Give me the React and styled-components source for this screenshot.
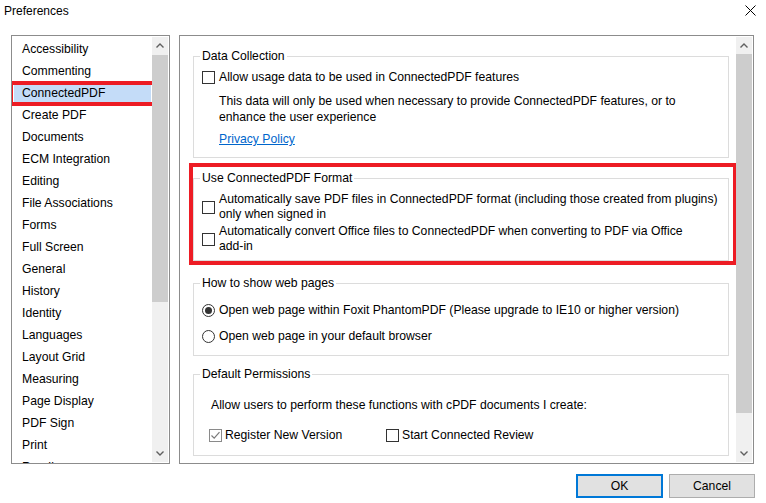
import React from 'react';
import styled, { createGlobalStyle } from 'styled-components';

const GlobalStyle = createGlobalStyle`
  html, body {
    margin: 0;
    padding: 0;
    background: #ffffff;
  }
  body {
    font-family: "Liberation Sans", Arial, sans-serif;
    font-size: 12.2px;
    color: #000000;
  }
`;

const categories = [
  'Accessibility', 'Commenting', 'ConnectedPDF', 'Create PDF', 'Documents',
  'ECM Integration', 'Editing', 'File Associations', 'Forms', 'Full Screen',
  'General', 'History', 'Identity', 'Languages', 'Layout Grid', 'Measuring',
  'Page Display', 'PDF Sign', 'Print', 'Reading',
];

const Dialog = styled.div`
  width: 766px;
  height: 503px;
  background: #ffffff;
  display: flex;
  flex-direction: column;
  overflow: hidden;
`;

const TitleBar = styled.div`
  height: 35px;
  display: flex;
  justify-content: space-between;
  align-items: flex-start;
  padding: 4px 10px 0 4px;
  box-sizing: border-box;
  line-height: 15px;
`;

const Title = styled.span`
  font-size: 12px;
`;

const CloseButton = styled.div`
  width: 11px;
  height: 11px;
  margin-top: 1px;
  display: flex;
`;

const Body = styled.div`
  display: flex;
  gap: 9px;
  padding-left: 11px;
  height: 429px;
`;

const ListBox = styled.div`
  width: 159px;
  box-sizing: border-box;
  border: 1px solid #8c8c8c;
  display: flex;
`;

const ListItems = styled.div`
  flex: 1;
  padding: 4px 1px 0 2px;
  overflow: hidden;
`;

const ListItem = styled.div`
  position: relative;
  height: 18px;
  line-height: 18px;
  margin-bottom: 4px;
  padding-left: 8px;
  background: ${({ $selected }) => ($selected ? '#c4dcf8' : 'transparent')};
  white-space: nowrap;
`;

const Highlight = styled.div`
  position: absolute;
  left: -5px;
  top: -3px;
  right: -5px;
  bottom: -4px;
  border: 4px solid #ed1c24;
  pointer-events: none;
`;

const ScrollBar = styled.div`
  width: 16px;
  margin: 1px 1px 1px 0;
  background: #f0f0f0;
  display: flex;
  flex-direction: column;
`;

const ScrollArrow = styled.div`
  height: 17px;
  display: flex;
  align-items: center;
  justify-content: center;
  flex-shrink: 0;
`;

const ScrollGap = styled.div`
  height: ${({ $h }) => $h}px;
  flex-shrink: 0;
`;

const ScrollThumb = styled.div`
  height: ${({ $h }) => $h}px;
  background: #cdcdcd;
  flex-shrink: 0;
`;

const ScrollSpace = styled.div`
  flex: 1;
`;

const Panel = styled.div`
  width: 575px;
  box-sizing: border-box;
  border: 1px solid #8c8c8c;
  display: flex;
`;

const PanelContent = styled.div`
  flex: 1;
  padding: 0 7px 0 13px;
  overflow: hidden;
  display: flex;
  flex-direction: column;
`;

const GroupBox = styled.fieldset`
  margin: ${({ $mt }) => $mt}px 0 0 0;
  padding: 0 0 ${({ $pb }) => $pb}px 0;
  border: 1px solid #dcdcdc;
  min-width: 0;
`;

const Legend = styled.legend`
  padding: 0 2px;
  margin-left: 6px;
  line-height: 15px;
`;

const Annotated = styled.div`
  position: relative;
  margin-top: ${({ $mt }) => $mt}px;
`;

const RedFrame = styled.div`
  position: absolute;
  left: -4px;
  top: -8px;
  right: -8px;
  bottom: -4px;
  border: 4px solid #ed1c24;
  pointer-events: none;
`;

const OptionRow = styled.label`
  display: flex;
  align-items: center;
  gap: ${({ $gap }) => $gap || 4}px;
  margin-top: ${({ $mt }) => $mt}px;
  margin-left: ${({ $ml }) => $ml || 8}px;
  line-height: ${({ $lh }) => $lh || 16}px;
`;

const Box = styled.span`
  width: 13px;
  height: 13px;
  box-sizing: border-box;
  border: 1px solid ${({ $light }) => ($light ? '#8a8a8a' : '#333333')};
  background: #ffffff;
  flex-shrink: 0;
  display: flex;
  align-items: center;
  justify-content: center;
`;

const Radio = styled.span`
  width: 13px;
  height: 13px;
  box-sizing: border-box;
  border: 1px solid #333333;
  border-radius: 50%;
  flex-shrink: 0;
  display: flex;
  align-items: center;
  justify-content: center;

  &::after {
    content: '';
    width: 7px;
    height: 7px;
    border-radius: 50%;
    background: ${({ $on }) => ($on ? '#333333' : 'transparent')};
  }
`;

const Note = styled.p`
  margin: ${({ $mt }) => $mt}px 0 0 ${({ $ml }) => $ml}px;
  line-height: 16px;
`;

const Link = styled.a`
  display: block;
  margin: ${({ $mt }) => $mt}px 0 0 25px;
  line-height: 16px;
  color: #0066cc;
  text-decoration: underline;
`;

const PermRow = styled.div`
  display: flex;
  margin: 14px 0 0 8px;
`;

const PermItem = styled.div`
  width: ${({ $w }) => $w}px;
`;

const Footer = styled.div`
  display: flex;
  justify-content: flex-end;
  gap: 6px;
  padding: 10px 11px 0 0;
`;

const Button = styled.button`
  width: ${({ $w }) => $w}px;
  height: 24px;
  box-sizing: border-box;
  background: #e1e1e1;
  border: ${({ $primary }) => ($primary ? '2px solid #0078d7' : '1px solid #adadad')};
  font-family: inherit;
  font-size: 12.2px;
  color: #000000;
  padding: 0;
`;

const Chevron = ({ up }) => (
  <svg width="8" height="5" viewBox="0 0 8 5">
    <polyline
      points={up ? '0.5,4.5 4,1 7.5,4.5' : '0.5,0.5 4,4 7.5,0.5'}
      fill="none"
      stroke="#606060"
      strokeWidth="1.4"
    />
  </svg>
);

const Check = () => (
  <svg width="11" height="11" viewBox="0 0 11 11">
    <polyline points="1.5,5.5 4.2,8.2 9.5,2.2" fill="none" stroke="#7a7a7a" strokeWidth="1.2" />
  </svg>
);

const Scroll = ({ before, thumb }) => (
  <ScrollBar>
    <ScrollArrow><Chevron up /></ScrollArrow>
    <ScrollGap $h={before} />
    <ScrollThumb $h={thumb} />
    <ScrollSpace />
    <ScrollArrow><Chevron /></ScrollArrow>
  </ScrollBar>
);

const App = () => {
  return (
    <Dialog>
      <GlobalStyle />
      <TitleBar>
        <Title>Preferences</Title>
        <CloseButton>
          <svg width="11" height="11" viewBox="0 0 11 11">
            <path d="M0.5 0.5 L10.5 10.5 M10.5 0.5 L0.5 10.5" stroke="#000" strokeWidth="1" />
          </svg>
        </CloseButton>
      </TitleBar>

      <Body>
        <ListBox>
          <ListItems>
            {categories.map((c) => (
              <ListItem key={c} $selected={c === 'ConnectedPDF'}>
                {c}
                {c === 'ConnectedPDF' && <Highlight />}
              </ListItem>
            ))}
          </ListItems>
          <Scroll before={1} thumb={247} />
        </ListBox>

        <Panel>
          <PanelContent>
            <GroupBox $mt={13} $pb={10}>
              <Legend>Data Collection</Legend>
              <OptionRow $mt={5}>
                <Box />
                Allow usage data to be used in ConnectedPDF features
              </OptionRow>
              <Note $mt={8} $ml={25}>
                This data will only be used when necessary to provide ConnectedPDF features, or to
                <br />
                enhance the user experience
              </Note>
              <Link $mt={6}>Privacy Policy</Link>
            </GroupBox>

            <Annotated $mt={13}>
              <GroupBox $mt={0} $pb={6}>
                <Legend>Use ConnectedPDF Format</Legend>
                <OptionRow $mt={6} $lh={15}>
                  <Box />
                  <span>
                    Automatically save PDF files in ConnectedPDF format (including those created from plugins)
                    <br />
                    only when signed in
                  </span>
                </OptionRow>
                <OptionRow $mt={2} $lh={15}>
                  <Box />
                  <span>
                    Automatically convert Office files to ConnectedPDF when converting to PDF via Office
                    <br />
                    add-in
                  </span>
                </OptionRow>
              </GroupBox>
              <RedFrame />
            </Annotated>

            <GroupBox $mt={15} $pb={11}>
              <Legend>How to show web pages</Legend>
              <OptionRow $mt={11}>
                <Radio $on />
                Open web page within Foxit PhantomPDF (Please upgrade to IE10 or higher version)
              </OptionRow>
              <OptionRow $mt={10}>
                <Radio />
                Open web page in your default browser
              </OptionRow>
            </GroupBox>

            <GroupBox $mt={11} $pb={12}>
              <Legend>Default Permissions</Legend>
              <Note $mt={15} $ml={17}>
                Allow users to perform these functions with cPDF documents I create:
              </Note>
              <PermRow>
                <PermItem $w={177}>
                  <OptionRow $mt={0} $ml={7} $gap={3}>
                    <Box $light><Check /></Box>
                    Register New Version
                  </OptionRow>
                </PermItem>
                <PermItem $w={200}>
                  <OptionRow $mt={0} $ml={7} $gap={3}>
                    <Box />
                    Start Connected Review
                  </OptionRow>
                </PermItem>
              </PermRow>
            </GroupBox>
          </PanelContent>
          <Scroll before={0} thumb={359} />
        </Panel>
      </Body>

      <Footer>
        <Button $primary $w={87}>OK</Button>
        <Button $w={86}>Cancel</Button>
      </Footer>
    </Dialog>
  );
};

export default App;
